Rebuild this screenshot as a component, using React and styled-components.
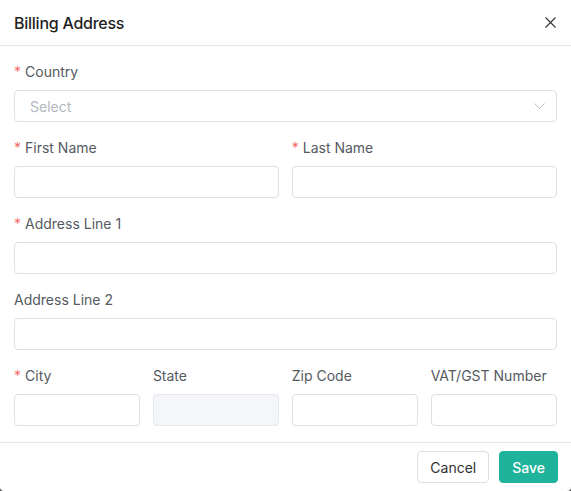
import React from "react";
import styled, { createGlobalStyle } from "styled-components";

const GlobalStyle = createGlobalStyle`
  html, body {
    margin: 0;
    padding: 0;
    background: #4a4a4a;
  }
  * {
    box-sizing: border-box;
  }
`;

const Modal = styled.div`
  width: 571px;
  height: 491px;
  background: #fff;
  border-radius: 0 0 4px 4px;
  font-family: Inter, "Noto Sans", sans-serif;
  display: flex;
  flex-direction: column;
`;

const Header = styled.div`
  height: 46px;
  padding: 0 15px 0 14px;
  display: flex;
  align-items: center;
  justify-content: space-between;
  border-bottom: 1px solid #e8e8e8;
`;

const Title = styled.h2`
  margin: 0;
  font-size: 16px;
  font-weight: 500;
  color: #1f1f1f;
  letter-spacing: -0.25px;
`;

const CloseButton = styled.button`
  border: none;
  background: transparent;
  padding: 0;
  width: 12px;
  height: 12px;
  display: flex;
  align-items: center;
  justify-content: center;
  cursor: pointer;
`;

const Body = styled.div`
  padding: 15px 14px 1px;
  display: flex;
  flex-direction: column;
`;

const Row = styled.div`
  display: grid;
  grid-template-columns: repeat(${(p) => p.$cols || 1}, 1fr);
  column-gap: 12.5px;
`;

const Field = styled.div`
  display: flex;
  flex-direction: column;
  margin-bottom: 15px;
`;

const Label = styled.label`
  height: 22px;
  line-height: 22px;
  margin-bottom: 7px;
  font-size: 14px;
  color: #555a61;
  white-space: nowrap;

  &::before {
    content: ${(p) => (p.$required ? '"*"' : "none")};
    color: #f56c6c;
    margin-right: 4px;
  }
`;

const Input = styled.input`
  height: 32px;
  width: 100%;
  border: 1px solid ${(p) => (p.disabled ? "#e6e8ec" : "#dcdfe6")};
  border-radius: 4px;
  background: ${(p) => (p.disabled ? "#f5f6f9" : "#fff")};
  padding: 0 15px;
  font-family: inherit;
  font-size: 14px;
  outline: none;
`;

const SelectBox = styled.div`
  height: 32px;
  border: 1px solid #dcdfe6;
  border-radius: 4px;
  padding: 0 11px 0 15px;
  display: flex;
  align-items: center;
  justify-content: space-between;
  font-size: 14px;
  color: #b4b7bd;
`;

const Footer = styled.div`
  margin-top: auto;
  border-top: 1px solid #e8e8e8;
  padding: 8px 13px 8px;
  display: flex;
  justify-content: flex-end;
  gap: 10px;
`;

const Button = styled.button`
  height: 32px;
  padding: 0 12px;
  border-radius: 4px;
  font-family: inherit;
  font-size: 14px;
  font-weight: ${(p) => (p.$primary ? 500 : 400)};
  border: 1px solid ${(p) => (p.$primary ? "#1fb39c" : "#dcdfe6")};
  background: ${(p) => (p.$primary ? "#1fb39c" : "#fff")};
  color: ${(p) => (p.$primary ? "#fff" : "#303133")};
  cursor: pointer;
`;

const FormField = ({ label, required, disabled }) => (
  <Field>
    <Label $required={required}>{label}</Label>
    <Input disabled={disabled} />
  </Field>
);

const App = () => {
  return (
    <>
      <GlobalStyle />
      <Modal>
        <Header>
          <Title>Billing Address</Title>
          <CloseButton>
            <svg width="11" height="11" viewBox="0 0 11 11">
              <path d="M0.5 0.5 L10.5 10.5 M10.5 0.5 L0.5 10.5" stroke="#333" strokeWidth="1.1" />
            </svg>
          </CloseButton>
        </Header>
        <Body>
          <Field>
            <Label $required>Country</Label>
            <SelectBox>
              <span>Select</span>
              <svg width="11" height="6" viewBox="0 0 11 6">
                <path d="M0.5 0.5 L5.5 5.5 L10.5 0.5" fill="none" stroke="#b8bcc4" strokeWidth="1" />
              </svg>
            </SelectBox>
          </Field>
          <Row $cols={2}>
            <FormField label="First Name" required />
            <FormField label="Last Name" required />
          </Row>
          <FormField label="Address Line 1" required />
          <FormField label="Address Line 2" />
          <Row $cols={4}>
            <FormField label="City" required />
            <FormField label="State" disabled />
            <FormField label="Zip Code" />
            <FormField label="VAT/GST Number" />
          </Row>
        </Body>
        <Footer>
          <Button>Cancel</Button>
          <Button $primary>Save</Button>
        </Footer>
      </Modal>
    </>
  );
};

export default App;
